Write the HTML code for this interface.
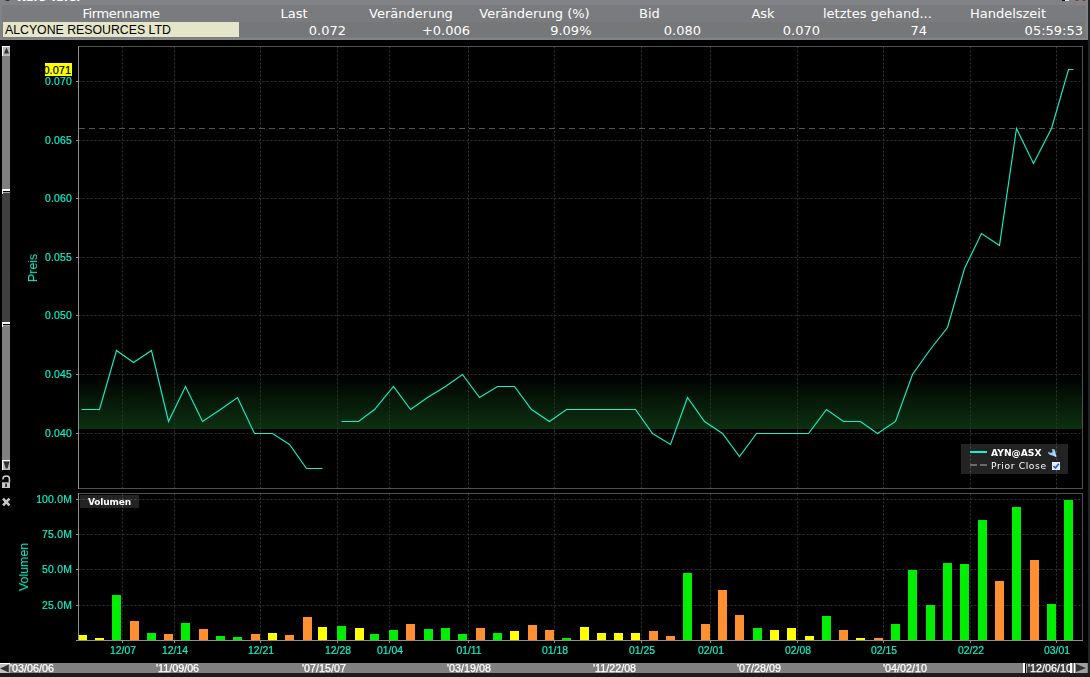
<!DOCTYPE html>
<html><head><meta charset="utf-8"><title>Kurs Tafel</title>
<style>
html,body{margin:0;padding:0;background:#000;}
body{width:1090px;height:677px;position:relative;overflow:hidden;font-family:"Liberation Sans",sans-serif;}
.a{position:absolute;}
.hd{position:absolute;top:5px;height:17px;font:13px/17px "DejaVu Sans","Liberation Sans",sans-serif;color:#fff;text-align:center;white-space:nowrap;}
.vl{position:absolute;top:23px;height:16px;font:13px/16px "DejaVu Sans","Liberation Sans",sans-serif;color:#fff;text-align:right;white-space:nowrap;}
.yl{position:absolute;will-change:transform;letter-spacing:0.2px;color:#0cf0c8;font:10.4px/12px "Liberation Sans",sans-serif;white-space:nowrap;text-align:right;width:60px;height:12px;-webkit-text-stroke:0.2px #0cf0c8;}
.dl{position:absolute;will-change:transform;color:#0cf0c8;font:10.4px/12px "Liberation Sans",sans-serif;white-space:nowrap;text-align:center;width:40px;height:12px;top:645px;-webkit-text-stroke:0.2px #0cf0c8;}
.sl{position:absolute;will-change:transform;color:#fff;font:10.75px/10px "Liberation Sans",sans-serif;white-space:nowrap;height:10px;top:663px;overflow:hidden;-webkit-text-stroke:0.25px #fff;}
</style></head><body>

<div class="a" style="left:0;top:0;width:1088px;height:40px;background:#7a7b7e"></div>
<div class="a" style="left:0;top:0;width:1088px;height:5px;background:#828386"></div>
<div class="a" style="left:0;top:0;width:2px;height:40px;background:#828386"></div>
<div class="a" style="left:1086px;top:0;width:2px;height:40px;background:#828386"></div>
<div class="a" style="left:5px;top:-3px;width:5px;height:4px;border-radius:2.5px;background:#2a2a2c"></div>
<div class="a" style="left:1062px;top:0;width:3px;height:1px;background:#111"></div><div class="a" style="left:1065px;top:0;width:4px;height:1px;background:#e8e8e8"></div>
<div class="a" style="left:1075px;top:-3px;width:4px;height:4.2px;border-radius:2px;background:#8b2a2a"></div><div class="a" style="left:1082px;top:-3px;width:4px;height:4.2px;border-radius:2px;background:#8b2a2a"></div>
<div class="a" style="left:17px;top:-9px;font:bold 11.3px 'DejaVu Sans',sans-serif;color:#fff;white-space:nowrap">Kurs Tafel</div>
<div class="a" style="left:0;top:38px;width:1088px;height:2px;background:#828386"></div>
<div class="a" style="left:3px;top:22px;width:1082px;height:15px;background:#767779"></div>
<div class="a" style="left:3px;top:22px;width:236px;height:15px;background:#e5e5c9"></div>
<div class="a" style="left:5px;top:22px;height:16px;font:12.3px/16px 'Liberation Sans',sans-serif;color:#000;white-space:nowrap">ALCYONE RESOURCES LTD</div>
<div class="hd" style="left:3px;width:236px;letter-spacing:-0.4px">Firmenname</div>
<div class="hd" style="left:239px;width:110px">Last</div>
<div class="vl" style="left:239px;width:107px">0.072</div>
<div class="hd" style="left:349px;width:124px">Veränderung</div>
<div class="vl" style="left:349px;width:121px">+0.006</div>
<div class="hd" style="left:473px;width:123px">Veränderung (%)</div>
<div class="vl" style="left:473px;width:118.5px">9.09%</div>
<div class="hd" style="left:596px;width:107px">Bid</div>
<div class="vl" style="left:596px;width:105px">0.080</div>
<div class="hd" style="left:703px;width:120px">Ask</div>
<div class="vl" style="left:703px;width:117px">0.070</div>
<div class="hd" style="left:823px;width:107px">letztes gehand...</div>
<div class="vl" style="left:823px;width:104px">74</div>
<div class="hd" style="left:930px;width:156px">Handelszeit</div>
<div class="vl" style="left:930px;width:153px">05:59:53</div>
<div class="a" style="left:1088px;top:0;width:2px;height:677px;background:#242222"></div>
<div class="a" style="left:2px;top:46px;width:8px;height:424px;background:#808080"></div>
<div class="a" style="left:2px;top:193px;width:8px;height:129px;background:#404040"></div>
<div class="a" style="left:2px;top:189px;width:8px;height:2px;background:#fff"></div><div class="a" style="left:2px;top:189px;width:1px;height:5px;background:#fff"></div><div class="a" style="left:3px;top:191px;width:7px;height:1px;background:#000"></div><div class="a" style="left:3px;top:192px;width:7px;height:1px;background:#a8a8a8"></div>
<div class="a" style="left:2px;top:322px;width:8px;height:2px;background:#fff"></div><div class="a" style="left:2px;top:322px;width:1px;height:5px;background:#fff"></div><div class="a" style="left:3px;top:324px;width:7px;height:1px;background:#000"></div><div class="a" style="left:3px;top:325px;width:7px;height:1px;background:#a8a8a8"></div>
<div class="a" style="left:2px;top:46px;width:7px;height:9px;background:#b8b8b8;border-left:1px solid #fff;border-top:1px solid #fff"></div>
<svg class="a" style="left:2px;top:46px" width="8" height="10"><path d="M4.5 1.5 L7 7.5 H2 Z" fill="#333"/></svg>
<div class="a" style="left:2px;top:460px;width:7px;height:9px;background:#b8b8b8;border-left:1px solid #fff;border-top:1px solid #fff"></div>
<svg class="a" style="left:2px;top:460px" width="8" height="10"><path d="M1.5 1.5 H7.5 L5.5 8.5 H3.8 Z" fill="#333"/></svg>
<svg class="a" style="left:2px;top:475px" width="9" height="14"><path d="M1 4.6 V3.6 Q1 0.9 4.4 0.9 Q7.4 0.9 7.4 3.6 V7.6" fill="none" stroke="#d4d4d4" stroke-width="1.5"/><rect x="0" y="7.3" width="8" height="5.7" fill="#c8c8c8"/><rect x="3.2" y="8.6" width="1.7" height="3.4" fill="#222"/></svg>
<svg class="a" style="left:2px;top:497px" width="9" height="10"><path d="M1 1.6 L7.4 8.4 M7.4 1.6 L1 8.4" stroke="#c8c8c8" stroke-width="2.5" fill="none"/></svg>
<svg width="1090" height="677" viewBox="0 0 1090 677" style="position:absolute;left:0;top:0" shape-rendering="crispEdges">
<defs><linearGradient id="gb" x1="0" y1="0" x2="0" y2="1"><stop offset="0" stop-color="#0c3011" stop-opacity="0"/><stop offset="0.5" stop-color="#0c3011" stop-opacity="0.54"/><stop offset="1" stop-color="#0c3011" stop-opacity="1"/></linearGradient></defs>
<rect x="79" y="375" width="1003" height="54" fill="url(#gb)"/>
<line x1="78.5" x2="1082" y1="81.5" y2="81.5" stroke="#343434" stroke-dasharray="2 2" shape-rendering="geometricPrecision"/>
<line x1="76" x2="78" y1="81.5" y2="81.5" stroke="#909090"/>
<line x1="78.5" x2="1082" y1="140.5" y2="140.5" stroke="#343434" stroke-dasharray="2 2" shape-rendering="geometricPrecision"/>
<line x1="76" x2="78" y1="140.5" y2="140.5" stroke="#909090"/>
<line x1="78.5" x2="1082" y1="198.5" y2="198.5" stroke="#343434" stroke-dasharray="2 2" shape-rendering="geometricPrecision"/>
<line x1="76" x2="78" y1="198.5" y2="198.5" stroke="#909090"/>
<line x1="78.5" x2="1082" y1="257.5" y2="257.5" stroke="#343434" stroke-dasharray="2 2" shape-rendering="geometricPrecision"/>
<line x1="76" x2="78" y1="257.5" y2="257.5" stroke="#909090"/>
<line x1="78.5" x2="1082" y1="315.5" y2="315.5" stroke="#343434" stroke-dasharray="2 2" shape-rendering="geometricPrecision"/>
<line x1="76" x2="78" y1="315.5" y2="315.5" stroke="#909090"/>
<line x1="78.5" x2="1082" y1="374.5" y2="374.5" stroke="#343434" stroke-dasharray="2 2" shape-rendering="geometricPrecision"/>
<line x1="76" x2="78" y1="374.5" y2="374.5" stroke="#909090"/>
<line x1="78.5" x2="1082" y1="433.5" y2="433.5" stroke="#343434" stroke-dasharray="2 2" shape-rendering="geometricPrecision"/>
<line x1="76" x2="78" y1="433.5" y2="433.5" stroke="#909090"/>
<line x1="122.5" x2="122.5" y1="46.5" y2="488" stroke="#343434" stroke-dasharray="2 2" shape-rendering="geometricPrecision"/>
<line x1="122.5" x2="122.5" y1="493.5" y2="640" stroke="#343434" stroke-dasharray="2 2" shape-rendering="geometricPrecision"/>
<line x1="122.5" x2="122.5" y1="640" y2="643" stroke="#909090"/>
<line x1="174.5" x2="174.5" y1="46.5" y2="488" stroke="#343434" stroke-dasharray="2 2" shape-rendering="geometricPrecision"/>
<line x1="174.5" x2="174.5" y1="493.5" y2="640" stroke="#343434" stroke-dasharray="2 2" shape-rendering="geometricPrecision"/>
<line x1="174.5" x2="174.5" y1="640" y2="643" stroke="#909090"/>
<line x1="260.5" x2="260.5" y1="46.5" y2="488" stroke="#343434" stroke-dasharray="2 2" shape-rendering="geometricPrecision"/>
<line x1="260.5" x2="260.5" y1="493.5" y2="640" stroke="#343434" stroke-dasharray="2 2" shape-rendering="geometricPrecision"/>
<line x1="260.5" x2="260.5" y1="640" y2="643" stroke="#909090"/>
<line x1="337.5" x2="337.5" y1="46.5" y2="488" stroke="#343434" stroke-dasharray="2 2" shape-rendering="geometricPrecision"/>
<line x1="337.5" x2="337.5" y1="493.5" y2="640" stroke="#343434" stroke-dasharray="2 2" shape-rendering="geometricPrecision"/>
<line x1="337.5" x2="337.5" y1="640" y2="643" stroke="#909090"/>
<line x1="389.5" x2="389.5" y1="46.5" y2="488" stroke="#343434" stroke-dasharray="2 2" shape-rendering="geometricPrecision"/>
<line x1="389.5" x2="389.5" y1="493.5" y2="640" stroke="#343434" stroke-dasharray="2 2" shape-rendering="geometricPrecision"/>
<line x1="389.5" x2="389.5" y1="640" y2="643" stroke="#909090"/>
<line x1="468.5" x2="468.5" y1="46.5" y2="488" stroke="#343434" stroke-dasharray="2 2" shape-rendering="geometricPrecision"/>
<line x1="468.5" x2="468.5" y1="493.5" y2="640" stroke="#343434" stroke-dasharray="2 2" shape-rendering="geometricPrecision"/>
<line x1="468.5" x2="468.5" y1="640" y2="643" stroke="#909090"/>
<line x1="554.5" x2="554.5" y1="46.5" y2="488" stroke="#343434" stroke-dasharray="2 2" shape-rendering="geometricPrecision"/>
<line x1="554.5" x2="554.5" y1="493.5" y2="640" stroke="#343434" stroke-dasharray="2 2" shape-rendering="geometricPrecision"/>
<line x1="554.5" x2="554.5" y1="640" y2="643" stroke="#909090"/>
<line x1="641.5" x2="641.5" y1="46.5" y2="488" stroke="#343434" stroke-dasharray="2 2" shape-rendering="geometricPrecision"/>
<line x1="641.5" x2="641.5" y1="493.5" y2="640" stroke="#343434" stroke-dasharray="2 2" shape-rendering="geometricPrecision"/>
<line x1="641.5" x2="641.5" y1="640" y2="643" stroke="#909090"/>
<line x1="710.5" x2="710.5" y1="46.5" y2="488" stroke="#343434" stroke-dasharray="2 2" shape-rendering="geometricPrecision"/>
<line x1="710.5" x2="710.5" y1="493.5" y2="640" stroke="#343434" stroke-dasharray="2 2" shape-rendering="geometricPrecision"/>
<line x1="710.5" x2="710.5" y1="640" y2="643" stroke="#909090"/>
<line x1="797.5" x2="797.5" y1="46.5" y2="488" stroke="#343434" stroke-dasharray="2 2" shape-rendering="geometricPrecision"/>
<line x1="797.5" x2="797.5" y1="493.5" y2="640" stroke="#343434" stroke-dasharray="2 2" shape-rendering="geometricPrecision"/>
<line x1="797.5" x2="797.5" y1="640" y2="643" stroke="#909090"/>
<line x1="883.5" x2="883.5" y1="46.5" y2="488" stroke="#343434" stroke-dasharray="2 2" shape-rendering="geometricPrecision"/>
<line x1="883.5" x2="883.5" y1="493.5" y2="640" stroke="#343434" stroke-dasharray="2 2" shape-rendering="geometricPrecision"/>
<line x1="883.5" x2="883.5" y1="640" y2="643" stroke="#909090"/>
<line x1="970.5" x2="970.5" y1="46.5" y2="488" stroke="#343434" stroke-dasharray="2 2" shape-rendering="geometricPrecision"/>
<line x1="970.5" x2="970.5" y1="493.5" y2="640" stroke="#343434" stroke-dasharray="2 2" shape-rendering="geometricPrecision"/>
<line x1="970.5" x2="970.5" y1="640" y2="643" stroke="#909090"/>
<line x1="1056.5" x2="1056.5" y1="46.5" y2="488" stroke="#343434" stroke-dasharray="2 2" shape-rendering="geometricPrecision"/>
<line x1="1056.5" x2="1056.5" y1="493.5" y2="640" stroke="#343434" stroke-dasharray="2 2" shape-rendering="geometricPrecision"/>
<line x1="1056.5" x2="1056.5" y1="640" y2="643" stroke="#909090"/>
<line x1="79" x2="1082" y1="128.5" y2="128.5" stroke="#545454" stroke-dasharray="6 4"/>
<path d="M79 488.5 H1082.5 V46.5 H79" fill="none" stroke="#505050"/>
<path d="M78.5 46 V489" fill="none" stroke="#909090"/>
<line x1="78.5" x2="1082" y1="499.5" y2="499.5" stroke="#343434" stroke-dasharray="2 2" shape-rendering="geometricPrecision"/>
<line x1="76" x2="78" y1="499.5" y2="499.5" stroke="#909090"/>
<line x1="78.5" x2="1082" y1="534.5" y2="534.5" stroke="#343434" stroke-dasharray="2 2" shape-rendering="geometricPrecision"/>
<line x1="76" x2="78" y1="534.5" y2="534.5" stroke="#909090"/>
<line x1="78.5" x2="1082" y1="569.5" y2="569.5" stroke="#343434" stroke-dasharray="2 2" shape-rendering="geometricPrecision"/>
<line x1="76" x2="78" y1="569.5" y2="569.5" stroke="#909090"/>
<line x1="78.5" x2="1082" y1="605.5" y2="605.5" stroke="#343434" stroke-dasharray="2 2" shape-rendering="geometricPrecision"/>
<line x1="76" x2="78" y1="605.5" y2="605.5" stroke="#909090"/>
<rect x="79" y="635" width="8" height="5" fill="#ffff00"/>
<rect x="95" y="638" width="9" height="2" fill="#ffff00"/>
<rect x="112" y="595" width="9" height="45" fill="#00ee00"/>
<rect x="130" y="621" width="9" height="19" fill="#ff9032"/>
<rect x="147" y="633" width="9" height="7" fill="#00ee00"/>
<rect x="164" y="634" width="9" height="6" fill="#ff9032"/>
<rect x="181" y="623" width="9" height="17" fill="#00ee00"/>
<rect x="199" y="629" width="9" height="11" fill="#ff9032"/>
<rect x="216" y="636" width="9" height="4" fill="#00ee00"/>
<rect x="233" y="637" width="9" height="3" fill="#00ee00"/>
<rect x="251" y="634" width="9" height="6" fill="#ff9032"/>
<rect x="268" y="633" width="9" height="7" fill="#ffff00"/>
<rect x="285" y="635" width="9" height="5" fill="#ff9032"/>
<rect x="303" y="617" width="9" height="23" fill="#ff9032"/>
<rect x="318" y="627" width="9" height="13" fill="#ffff00"/>
<rect x="337" y="626" width="9" height="14" fill="#00ee00"/>
<rect x="355" y="628" width="9" height="12" fill="#ffff00"/>
<rect x="370" y="634" width="9" height="6" fill="#00ee00"/>
<rect x="389" y="630" width="9" height="10" fill="#00ee00"/>
<rect x="406" y="624" width="9" height="16" fill="#ff9032"/>
<rect x="424" y="629" width="9" height="11" fill="#00ee00"/>
<rect x="441" y="628" width="9" height="12" fill="#00ee00"/>
<rect x="458" y="634" width="9" height="6" fill="#00ee00"/>
<rect x="476" y="628" width="9" height="12" fill="#ff9032"/>
<rect x="493" y="633" width="9" height="7" fill="#00ee00"/>
<rect x="510" y="631" width="9" height="9" fill="#ffff00"/>
<rect x="528" y="625" width="9" height="15" fill="#ff9032"/>
<rect x="545" y="630" width="9" height="10" fill="#ff9032"/>
<rect x="562" y="638" width="9" height="2" fill="#00ee00"/>
<rect x="580" y="627" width="9" height="13" fill="#ffff00"/>
<rect x="597" y="633" width="9" height="7" fill="#ffff00"/>
<rect x="614" y="633" width="9" height="7" fill="#ffff00"/>
<rect x="631" y="633" width="9" height="7" fill="#ffff00"/>
<rect x="649" y="631" width="9" height="9" fill="#ff9032"/>
<rect x="666" y="636" width="9" height="4" fill="#ff9032"/>
<rect x="683" y="573" width="9" height="67" fill="#00ee00"/>
<rect x="701" y="624" width="9" height="16" fill="#ff9032"/>
<rect x="718" y="590" width="9" height="50" fill="#ff9032"/>
<rect x="735" y="615" width="9" height="25" fill="#ff9032"/>
<rect x="753" y="628" width="9" height="12" fill="#00ee00"/>
<rect x="770" y="630" width="9" height="10" fill="#ffff00"/>
<rect x="787" y="628" width="9" height="12" fill="#ffff00"/>
<rect x="805" y="636" width="9" height="4" fill="#ffff00"/>
<rect x="822" y="616" width="9" height="24" fill="#00ee00"/>
<rect x="839" y="630" width="9" height="10" fill="#ff9032"/>
<rect x="856" y="638" width="9" height="2" fill="#ffff00"/>
<rect x="874" y="638" width="9" height="2" fill="#ff9032"/>
<rect x="891" y="624" width="9" height="16" fill="#00ee00"/>
<rect x="908" y="570" width="9" height="70" fill="#00ee00"/>
<rect x="926" y="605" width="9" height="35" fill="#00ee00"/>
<rect x="943" y="563" width="9" height="77" fill="#00ee00"/>
<rect x="960" y="564" width="9" height="76" fill="#00ee00"/>
<rect x="978" y="520" width="9" height="120" fill="#00ee00"/>
<rect x="995" y="581" width="9" height="59" fill="#ff9032"/>
<rect x="1012" y="507" width="9" height="133" fill="#00ee00"/>
<rect x="1030" y="560" width="9" height="80" fill="#ff9032"/>
<rect x="1047" y="604" width="9" height="36" fill="#00ee00"/>
<rect x="1064" y="500" width="9" height="140" fill="#00ee00"/>
<path d="M79 493.5 H1082.5 V640" fill="none" stroke="#505050"/>
<path d="M78.5 493 V640.5 M76 640.5 H1083" fill="none" stroke="#909090"/>
</svg>
<svg width="1090" height="677" viewBox="0 0 1090 677" style="position:absolute;left:0;top:0">
<polyline points="81.5,409.5 99.5,409.5 116.5,350.5 133.5,362.5 151.5,350.5 168.5,421.5 185.5,386.5 202.5,421.5 220.5,409.5 237.5,397.5 254.5,433.5 272.5,433.5 289.5,444.5 306.5,468.5 322.5,468.5" fill="none" stroke="#14f0c8" stroke-width="1.15"/>
<polyline points="341.5,421.5 358.5,421.5 374.5,409.5 393.5,386.5 410.5,409.5 427.5,397.5 445.5,386.5 462.5,374.5 479.5,397.5 497.5,386.5 514.5,386.5 531.5,409.5 549.5,421.5 566.5,409.5 583.5,409.5 601.5,409.5 618.5,409.5 635.5,409.5 652.5,433.5 670.5,444.5 687.5,397.5 704.5,421.5 722.5,433.5 739.5,456.5 756.5,433.5 774.5,433.5 791.5,433.5 808.5,433.5 826.5,409.5 843.5,421.5 860.5,421.5 877.5,433.5 895.5,421.5 912.5,374.5 929.5,350.5 947.5,327.5 964.5,268.5 981.5,233.5 999.5,245.5 1016.5,128.5 1033.5,163.5 1051.5,128.5 1068.5,69.5 1073.5,69.5" fill="none" stroke="#14f0c8" stroke-width="1.15"/>
</svg>
<div class="yl" style="left:12px;top:76px">0.070</div>
<div class="yl" style="left:12px;top:135px">0.065</div>
<div class="yl" style="left:12px;top:193px">0.060</div>
<div class="yl" style="left:12px;top:252px">0.055</div>
<div class="yl" style="left:12px;top:310px">0.050</div>
<div class="yl" style="left:12px;top:369px">0.045</div>
<div class="yl" style="left:12px;top:428px">0.040</div>
<div class="yl" style="left:12px;top:494px">100.0M</div>
<div class="yl" style="left:12px;top:529px">75.0M</div>
<div class="yl" style="left:12px;top:564px">50.0M</div>
<div class="yl" style="left:12px;top:600px">25.0M</div>
<div class="a" style="left:45px;top:63px;width:27px;height:13px;background:#ffff00;overflow:hidden"><div style="position:absolute;right:1px;top:1px;height:13px;font:11px/13px 'Liberation Sans',sans-serif;color:#000;-webkit-text-stroke:0.2px #000;white-space:nowrap">0.071</div></div>
<div class="a" style="left:33px;top:267.5px;width:0;height:0"><div style="position:absolute;will-change:transform;transform:translate(-50%,-50%) rotate(-90deg);font:12.4px 'Liberation Sans',sans-serif;color:#0cf0c8;white-space:nowrap">Preis</div></div>
<div class="a" style="left:24px;top:567px;width:0;height:0"><div style="position:absolute;will-change:transform;transform:translate(-50%,-50%) rotate(-90deg);font:12.4px 'Liberation Sans',sans-serif;color:#0cf0c8;white-space:nowrap">Volumen</div></div>
<div class="dl" style="left:102.5px">12/07</div>
<div class="dl" style="left:154.5px">12/14</div>
<div class="dl" style="left:240.5px">12/21</div>
<div class="dl" style="left:317.5px">12/28</div>
<div class="dl" style="left:369.5px">01/04</div>
<div class="dl" style="left:448.5px">01/11</div>
<div class="dl" style="left:534.5px">01/18</div>
<div class="dl" style="left:621.5px">01/25</div>
<div class="dl" style="left:690.5px">02/01</div>
<div class="dl" style="left:777.5px">02/08</div>
<div class="dl" style="left:863.5px">02/15</div>
<div class="dl" style="left:950.5px">02/22</div>
<div class="dl" style="left:1036.5px">03/01</div>
<div class="a" style="left:80px;top:495px;width:59px;height:13px;background:rgba(255,255,255,0.137)"></div>
<div class="a" style="will-change:transform;left:88px;top:496px;height:13px;font:bold 9px/13px 'DejaVu Sans',sans-serif;letter-spacing:-0.15px;color:#fff;white-space:nowrap">Volumen</div>
<div class="a" style="left:961px;top:444px;width:107px;height:30px;background:rgba(255,255,255,0.137)"></div>
<div class="a" style="left:970px;top:451px;width:17px;height:2px;background:#19f0d0"></div>
<div class="a" style="left:970px;top:464px;width:7px;height:2px;background:#6a6a6a"></div><div class="a" style="left:980px;top:464px;width:7px;height:2px;background:#6a6a6a"></div>
<div class="a" style="will-change:transform;left:991px;top:446px;height:13px;font:bold 9.2px/13px 'DejaVu Sans',sans-serif;color:#fff;white-space:nowrap">AYN@ASX</div>
<div class="a" style="will-change:transform;left:991px;top:459px;height:13px;font:9.2px/13px 'DejaVu Sans',sans-serif;letter-spacing:0.6px;color:#fff;white-space:nowrap">Prior Close</div>
<svg class="a" style="left:1048px;top:449px" width="9" height="9"><defs><linearGradient id="wg" x1="0" y1="0" x2="1" y2="1"><stop offset="0" stop-color="#6aaeee"/><stop offset="1" stop-color="#cfe6fb"/></linearGradient></defs><path d="M3.6 0.1 L6.2 0.3 Q7.4 1.2 7.4 3 L8.4 8.3 L4.6 6.4 Q1.5 6.6 0.3 4.6 L0.2 2.4 L2 3.8 L4.2 3.6 L4.4 1.8 Z" fill="url(#wg)"/></svg>
<div class="a" style="left:1052px;top:462px;width:8px;height:8px;background:#e8eefc"></div>
<svg class="a" style="left:1052px;top:462px" width="8" height="8"><path d="M1.5 4 L3.5 6 L6.8 1.8" stroke="#1c5ad8" stroke-width="1.6" fill="none"/></svg>
<div class="a" style="left:0;top:663px;width:1088px;height:10px;background:#808080"></div>
<div class="a" style="left:0;top:673px;width:1090px;height:4px;background:#1c1c1c"></div>
<div class="sl" style="left:9.7px">'03/06/06</div>
<div class="sl" style="left:155.7px">'11/09/06</div>
<div class="sl" style="left:301.7px">'07/15/07</div>
<div class="sl" style="left:446.7px">'03/19/08</div>
<div class="sl" style="left:592.7px">'11/22/08</div>
<div class="sl" style="left:736.7px">'07/28/09</div>
<div class="sl" style="left:882.7px">'04/02/10</div>
<div class="a" style="left:1023px;top:663px;width:49px;height:10px;background:#404040"></div>
<div class="a" style="left:1023px;top:663px;width:2px;height:10px;background:#fff"></div><div class="a" style="left:1025px;top:664px;width:1px;height:9px;background:#000"></div><div class="a" style="left:1026px;top:664px;width:1px;height:9px;background:#aaa"></div>
<div class="a" style="left:1070px;top:663px;width:2px;height:10px;background:#fff"></div>
<div class="sl" style="left:1028px">'12/06/10</div>
<div class="a" style="left:1074px;top:663px;width:13px;height:10px;background:#a0a0a0;border-left:1px solid #fff;box-sizing:border-box"></div>
<svg class="a" style="left:1075px;top:663px" width="12" height="10"><path d="M1 1 L11 5 L1 9Z" fill="#333"/></svg>
<svg class="a" style="left:0;top:663px" width="10" height="10"><rect width="10" height="10" fill="#c2c2c2"/><rect width="10" height="1" fill="#fff"/><path d="M8.8 1.6 L0 5.6 L8.8 9.6Z" fill="#333"/></svg>
</body></html>
